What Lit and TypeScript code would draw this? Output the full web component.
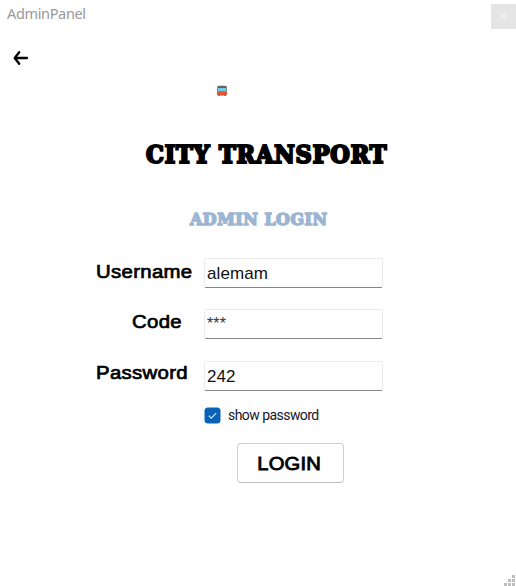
import { LitElement, html, css, svg } from "lit";
import { customElement, property } from "lit/decorators.js";

@customElement("form-row")
class FormRow extends LitElement {
  @property() label = "";
  @property() value = "";
  static styles = css`
    :host { display: grid; grid-template-columns: 107px 179px; height: 30px; }
    .label {
      justify-self: start; height: 22px; margin-top: var(--label-top, 2px);
      font: 18.5px/22px "Liberation Sans", Arial, sans-serif;
      letter-spacing: 0.3px; margin-left: var(--indent, -1px);
      transform: scaleX(1.1); transform-origin: left;
      -webkit-text-stroke: 0.7px #000; white-space: nowrap;
    }
    .field {
      box-sizing: border-box; height: 30px; padding: 1px 2px 0;
      border: 1px solid #ebebeb; border-bottom: 1px solid #868686; border-radius: 2px;
      font: 17px/28px "Liberation Sans", Arial, sans-serif; color: #111;
      letter-spacing: 0.1px;
    }
    .masked { line-height: 26px; font-size: 16px; color: #333; }
  `;
  render() {
    const masked = /^\*+$/.test(this.value);
    return html`<div class="label">${this.label}</div>
      <div class="field ${masked ? "masked" : ""}">${this.value}</div>`;
  }
}

@customElement("app-root")
class AppRoot extends LitElement {
  static styles = css`
    :host { display: flex; flex-direction: column; width: 516px; height: 586px; background: #fff;
      color: #000; font-family: "Liberation Sans", Arial, sans-serif; overflow: hidden; }
    svg { display: block; }
    .bar { display: flex; justify-content: space-between; height: 29px; flex: none; }
    .caption { margin: 3px 0 0 7px; font: 14.5px/20px "Noto Sans", sans-serif; color: #999; letter-spacing: -0.35px; }
    .close { width: 25px; height: 25px; margin-top: 4px; background: #e5e5e5; }
    .back { margin: 20px 0 0 12px; width: 17px; height: 18px; }
    .bus { margin: 18px 0 0 216px; width: 12px; height: 12px; }
    h1, h2 { margin: 0; font-family: "DejaVu Serif Condensed", "DejaVu Serif", serif; font-stretch: condensed; font-weight: 700; white-space: nowrap;
      align-self: flex-start; transform-origin: left; }
    h1 { margin: 39px 0 0 146px; font-size: 23.5px; line-height: 38px; letter-spacing: 0.8px; transform: scaleX(1.06); -webkit-text-stroke: 2px #000; }
    h2 { margin: 34px 0 0 190px; font-size: 17px; line-height: 22px; letter-spacing: 0.5px; transform: scaleX(1.04); color: #9bb5d3; -webkit-text-stroke: 1.4px #9bb5d3; }
    .form { display: flex; flex-direction: column; gap: 21px; margin: 28px 0 0 97px; }
    .user { --label-top: 3px; }
    .pass { margin-top: 1px; --label-top: 1px; }
    .code { --indent: 35px; }
    .check { display: flex; align-items: center; gap: 7px; height: 18px; margin: 15px 0 0 204px;
      font: 14px/18px Roboto, sans-serif; letter-spacing: -0.55px; color: #16162a; }
    .button { display: flex; align-items: center; justify-content: center; box-sizing: border-box;
      width: 107px; height: 40px; margin: 19px 0 0 237px; border: 1px solid #d0d0d0; border-bottom-color: #bcbcbc;
      border-radius: 4px; }
    .button span { font-size: 18.5px; letter-spacing: 0.2px; transform: scaleX(1.09); -webkit-text-stroke: 0.85px #000; padding: 1px 2px 0 0; }
    .grip { margin: auto 1px 0 auto; }
  `;
  render() {
    const dots = [[8, 0], [4, 4], [8, 4], [0, 8], [4, 8], [8, 8]];
    return html`
      <div class="bar">
        <div class="caption">AdminPanel</div>
        <div class="close"><svg width="25" height="25"><path d="M9.5 9l6 6M15.5 9l-6 6" stroke="#f3f3f3" stroke-width="1.7"/></svg></div>
      </div>
      <svg class="back" viewBox="0 0 17 18" fill="none" stroke="#000" stroke-width="2.3" stroke-linecap="round" stroke-linejoin="round"><path d="M15 9H3M7.2 3.2L2.7 9L7.2 14.8"/></svg>
      <svg class="bus" viewBox="0 0 12 12">
        <rect x="1.2" y=".8" width="9.6" height="9.8" rx="1.5" fill="#5e6668"/>
        <rect x="1.8" y="3" width="8.4" height="3.5" fill="#70cbe7"/>
        <rect x="1" y="6.8" width="10" height="3" rx=".4" fill="#ee5029"/>
        <path d="M2 10.3h2M8 10.3h2" stroke="#806055" stroke-width=".8"/>
      </svg>
      <h1>CITY TRANSPORT</h1>
      <h2>ADMIN LOGIN</h2>
      <div class="form">
        <form-row class="user" label="Username" value="alemam"></form-row>
        <form-row class="code" label="Code" value="***"></form-row>
        <form-row class="pass" label="Password" value="242"></form-row>
      </div>
      <div class="check">
        <svg width="17" height="17"><rect x=".5" y=".5" width="16" height="16" rx="3.5" fill="#0a62b8"/><path d="M4.7 8.7l2.5 2.5 5-5" fill="none" stroke="#d8ecff" stroke-width="1.1"/></svg>
        <span>show password</span>
      </div>
      <div class="button"><span>LOGIN</span></div>
      <svg class="grip" width="11" height="11">${dots.map(([x, y]) => svg`<rect x=${x} y=${y} width="3" height="3" fill="#bdbdbd"/>`)}</svg>
    `;
  }
}
